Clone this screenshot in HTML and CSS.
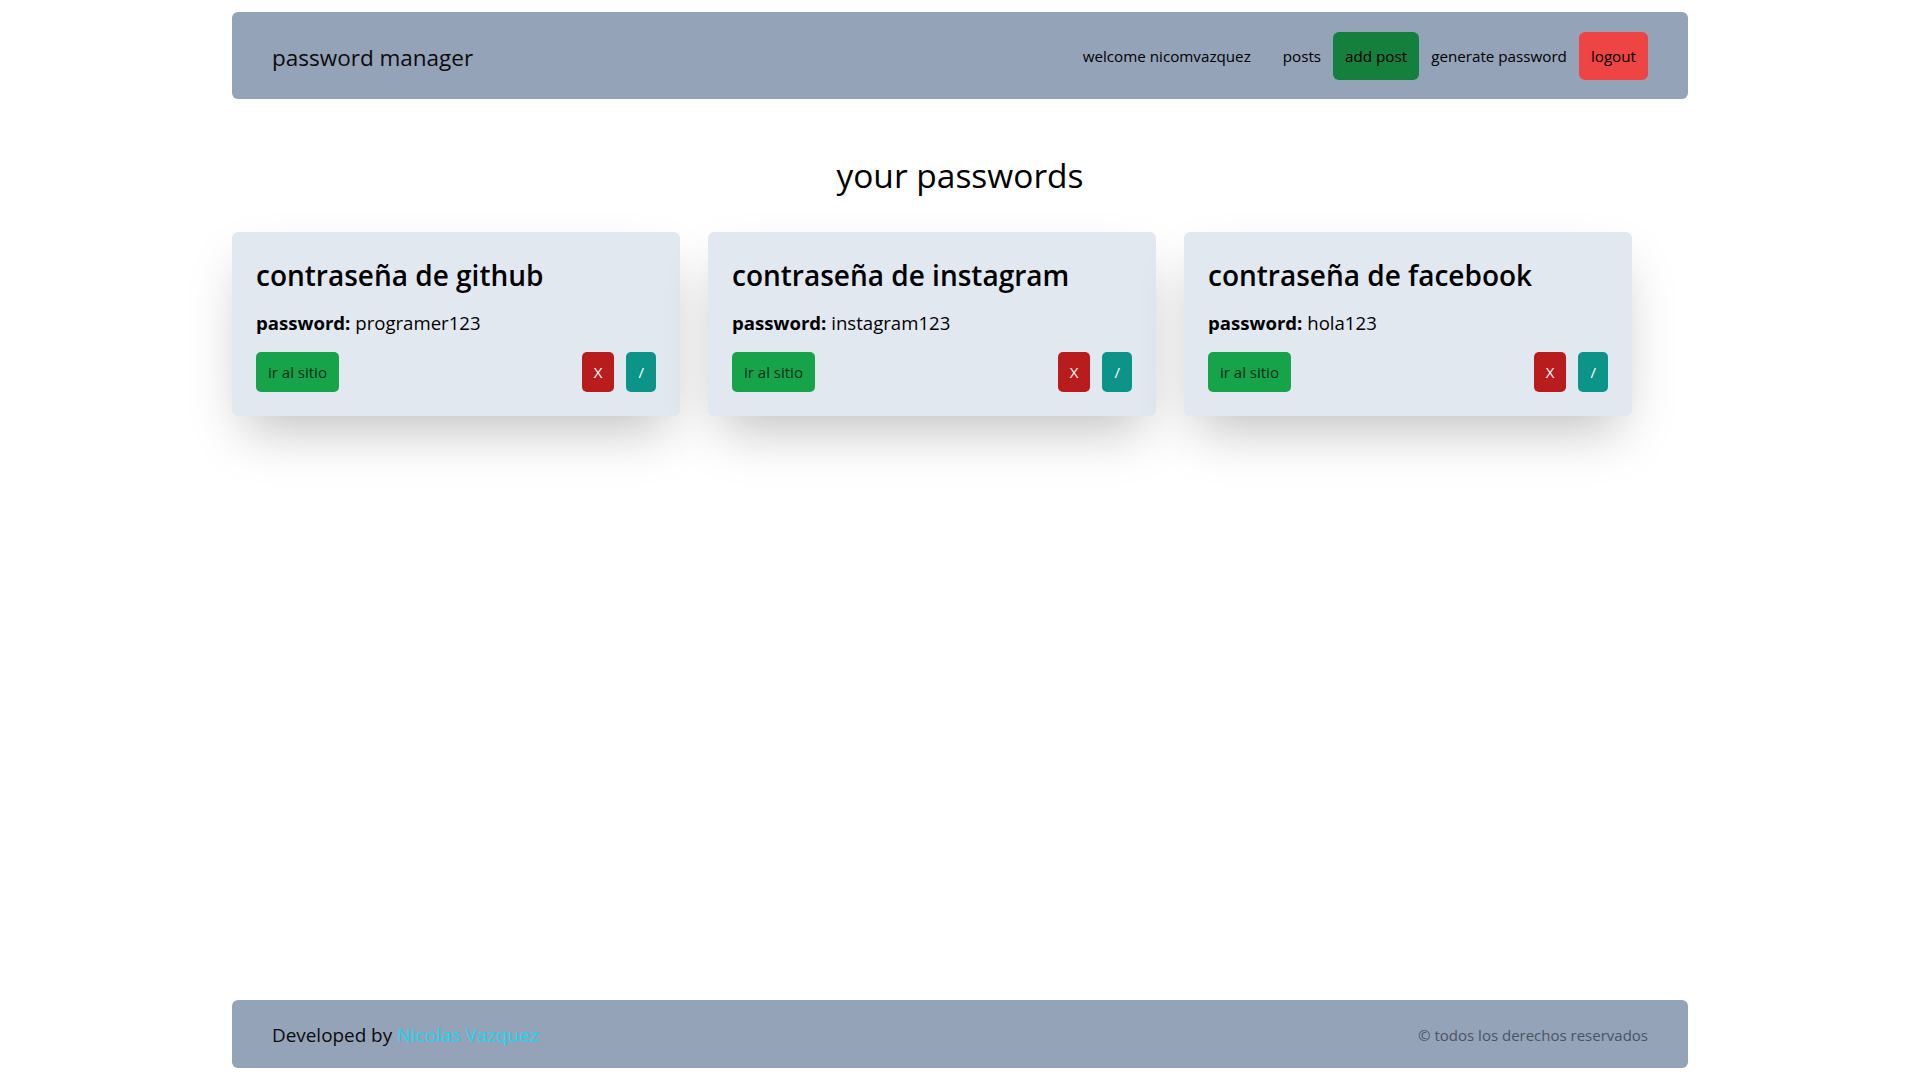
FILE: index.html
```html
<!DOCTYPE html>
<html lang="es">
<head>
<meta charset="utf-8">
<title>password manager</title>
<link rel="stylesheet" href="styles.css">
</head>
<body>
<div class="page">
  <header class="navbar">
    <a class="brand" href="#">password manager</a>
    <nav class="nav">
      <span class="welcome">welcome nicomvazquez</span>
      <a class="nav-link" href="#">posts</a>
      <a class="nav-btn btn-add" href="#">add post</a>
      <a class="nav-link" href="#">generate password</a>
      <a class="nav-btn btn-logout" href="#">logout</a>
    </nav>
  </header>

  <main class="main">
    <h1 class="page-title">your passwords</h1>
    <div class="cards">
      <div class="card">
        <h2 class="card-title">contraseña de github</h2>
        <p class="card-pass"><strong>password:</strong> programer123</p>
        <div class="card-actions">
          <a class="btn btn-site" href="#">ir al sitio</a>
          <div class="card-tools">
            <button class="btn btn-del">X</button>
            <button class="btn btn-edit">/</button>
          </div>
        </div>
      </div>
      <div class="card">
        <h2 class="card-title">contraseña de instagram</h2>
        <p class="card-pass"><strong>password:</strong> instagram123</p>
        <div class="card-actions">
          <a class="btn btn-site" href="#">ir al sitio</a>
          <div class="card-tools">
            <button class="btn btn-del">X</button>
            <button class="btn btn-edit">/</button>
          </div>
        </div>
      </div>
      <div class="card">
        <h2 class="card-title">contraseña de facebook</h2>
        <p class="card-pass"><strong>password:</strong> hola123</p>
        <div class="card-actions">
          <a class="btn btn-site" href="#">ir al sitio</a>
          <div class="card-tools">
            <button class="btn btn-del">X</button>
            <button class="btn btn-edit">/</button>
          </div>
        </div>
      </div>
    </div>
  </main>

  <footer class="footer">
    <span class="dev">Developed by <a class="dev-link" href="#">Nicolas Vazquez</a></span>
    <span class="rights">© todos los derechos reservados</span>
  </footer>
</div>
</body>
</html>
```

FILE: styles.css
```css
* { box-sizing: border-box; }

html, body {
  margin: 0;
  padding: 0;
  background: #ffffff;
}

body {
  font-family: "Open Sans", "Noto Sans", sans-serif;
  color: #000000;
}

a { text-decoration: none; color: inherit; }

.page {
  width: 1456px;
  margin: 0 auto;
  min-height: 100vh;
  padding: 12px 0 12px;
  display: flex;
  flex-direction: column;
}

.navbar {
  background: #94a3b8;
  border-radius: 6px;
  padding: 20px 40px 19px;
  display: flex;
  align-items: center;
  justify-content: space-between;
}

.brand {
  font-size: 22.5px;
  line-height: 32px;
  padding-top: 4px;
  color: #0b0b0b;
}

.nav {
  display: flex;
  align-items: center;
  font-size: 15.2px;
  line-height: 24px;
}

.welcome {
  margin-right: 20px;
}

.nav-link {
  padding: 12px 12px;
}

.nav-btn {
  padding: 12px 12px;
  border-radius: 6px;
}

.btn-add { background: #15803d; }
.btn-logout { background: #ef4444; }

.main {
  flex: 1;
}

.page-title {
  margin: 56px 0 37px;
  text-align: center;
  font-size: 33.5px;
  line-height: 40px;
  font-weight: 400;
}

.cards {
  display: flex;
  gap: 28px;
}

.card {
  width: 448px;
  background: #e2e8f0;
  border-radius: 6px;
  padding: 24px;
  box-shadow: 0 25px 50px -12px rgba(0, 0, 0, 0.25);
}

.card-title {
  margin: 0 0 16px;
  padding-top: 1px;
  font-size: 28px;
  line-height: 36px;
  font-weight: 600;
}

.card-pass {
  margin: 0 0 15px;
  font-size: 18.6px;
  line-height: 28px;
}

.card-pass strong { font-weight: 700; }

.card-actions {
  display: flex;
  justify-content: space-between;
  align-items: center;
}

.card-tools {
  display: flex;
  gap: 12px;
}

.btn {
  display: inline-block;
  border: 0;
  padding: 8px 12px;
  border-radius: 5px;
  font-family: inherit;
  font-size: 15px;
  line-height: 24px;
  cursor: pointer;
}

.btn-site { background: #16a34a; color: #052e16; }
.btn-del { background: #b91c1c; color: #ffffff; }
.btn-edit { background: #0d9488; color: #ffffff; }

.footer {
  margin-top: auto;
  background: #94a3b8;
  border-radius: 6px;
  padding: 21px 40px 19px;
  display: flex;
  align-items: center;
  justify-content: space-between;
}

.dev {
  font-size: 18.9px;
  line-height: 28px;
  color: #0b0b0b;
}

.dev-link { color: #22d3ee; }

.rights {
  font-size: 15px;
  line-height: 24px;
  color: #475569;
}
```
